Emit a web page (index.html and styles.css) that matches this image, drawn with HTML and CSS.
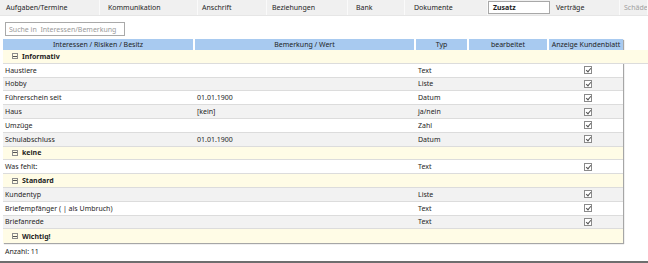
FILE: index.html
```html
<!DOCTYPE html>
<html lang="de">

<head>
    <meta charset="UTF-8">
    <meta name="viewport" content="width=device-width, initial-scale=1.0">
    <title>Zusatz</title>

    <link rel="stylesheet" href="styles.css">
</head>

<body>
    <div class="tabs">
        <div class="tab w1">Aufgaben/Termine</div>
        <div class="tab w2">Kommunikation</div>
        <div class="tab w3">Anschrift</div>
        <div class="tab w4">Beziehungen</div>
        <div class="tab w5">Bank</div>
        <div class="tab w6">Dokumente</div>
        <div class="tab w7 active">Zusatz</div>
        <div class="tab w8">Verträge</div>
        <div class="tab w9 disabled">Schäden</div>
    </div>

    <div class="toolbar">
        <input type="text" class="search" placeholder="Suche in  Interessen/Bemerkung">
    </div>

    <div class="grid">
        <div class="row head">
            <div>Interessen / Risiken / Besitz</div>
            <div>Bemerkung / Wert</div>
            <div>Typ</div>
            <div>bearbeitet</div>
            <div>Anzeige Kundenblatt</div>
        </div>

        <div class="group wide"><span class="toggle"></span>Informativ</div>
        <div class="row">
            <div>Haustiere</div><div></div><div>Text</div><div></div><div class="check"><span class="box"></span></div>
        </div>
        <div class="row alt">
            <div>Hobby</div><div></div><div>Liste</div><div></div><div class="check"><span class="box"></span></div>
        </div>
        <div class="row">
            <div>Führerschein seit</div><div>01.01.1900</div><div>Datum</div><div></div><div class="check"><span class="box"></span></div>
        </div>
        <div class="row alt">
            <div>Haus</div><div>[kein]</div><div>ja/nein</div><div></div><div class="check"><span class="box"></span></div>
        </div>
        <div class="row">
            <div>Umzüge</div><div></div><div>Zahl</div><div></div><div class="check"><span class="box"></span></div>
        </div>
        <div class="row alt">
            <div>Schulabschluss</div><div>01.01.1900</div><div>Datum</div><div></div><div class="check"><span class="box"></span></div>
        </div>

        <div class="group"><span class="toggle"></span>keine</div>
        <div class="row">
            <div>Was fehlt:</div><div></div><div>Text</div><div></div><div class="check"><span class="box"></span></div>
        </div>

        <div class="group"><span class="toggle"></span>Standard</div>
        <div class="row alt">
            <div>Kundentyp</div><div></div><div>Liste</div><div></div><div class="check"><span class="box"></span></div>
        </div>
        <div class="row">
            <div>Briefempfänger ( | als Umbruch)</div><div></div><div>Text</div><div></div><div class="check"><span class="box"></span></div>
        </div>
        <div class="row alt">
            <div>Briefanrede</div><div></div><div>Text</div><div></div><div class="check"><span class="box"></span></div>
        </div>

        <div class="group last"><span class="toggle"></span>Wichtig!</div>
    </div>

    <div class="count">Anzahl: 11</div>
    <div class="bottom-bar"></div>
</body>

</html>
```

FILE: styles.css
```css
body {
    margin: 0;
    width: 648px;
    height: 263px;
    overflow: hidden;
    position: relative;
    background-color: #fff;
    font-family: 'Noto Sans', sans-serif;
    font-size: 7px;
    color: #1e1e1e;
}

/* tab strip */
.tabs {
    display: flex;
    height: 15px;
    background-color: #f0f0f0;
    border-bottom: 1px solid #e6e6e6;
}

.tab {
    box-sizing: border-box;
    padding-left: 6px;
    line-height: 15px;
    border-right: 1px solid #fafafa;
    white-space: nowrap;
    overflow: hidden;
}

.w1 { width: 100px; }
.w2 { width: 98px; padding-left: 8px; }
.w3 { width: 69px; padding-left: 4px; }
.w4 { width: 81px; padding-left: 5px; }
.w5 { width: 57px; padding-left: 8px; }
.w6 { width: 83px; padding-left: 9px; }
.w7 { width: 62px; padding-left: 4px; }
.w8 { width: 70px; }
.w9 { flex: 1; padding-left: 4px; }

.tab.active {
    margin-top: 1px;
    height: 13px;
    line-height: 11px;
    background-color: #fff;
    border: 1px solid #a8a8a8;
    font-weight: bold;
}

.tab.disabled {
    color: #a0a0a0;
}

/* search */
.toolbar {
    padding: 6px 0 0 5px;
    height: 16px;
}

.search {
    box-sizing: border-box;
    width: 120px;
    height: 14px;
    margin: 0;
    padding: 0 3px;
    border: 1px solid #a9a9a9;
    font-family: inherit;
    font-size: 7px;
    color: #333;
}

.search::placeholder {
    color: #9a9a9a;
}

/* grid */
.grid {
    margin: 1px 0 0 3px;
    width: 620px;
    box-shadow: 1px 1px 1px rgba(0, 0, 0, 0.35);
}

.row {
    display: grid;
    grid-template-columns: 190px 219px 51px 78px 74px;
    column-gap: 2px;
    box-sizing: border-box;
    height: 13.8px;
    align-items: center;
    background-color: #fff;
    border-bottom: 1px solid #dcdcdc;
}

.row > div {
    padding-left: 2px;
    white-space: nowrap;
    overflow: hidden;
}

.row.alt {
    background-color: #f2f2f2;
}

.row.head {
    height: 11px;
    border-bottom: none;
    align-items: stretch;
}

.row.head > div {
    padding-left: 0;
    text-align: center;
    line-height: 11px;
    background-color: #a8caf0;
}

.group {
    display: flex;
    align-items: center;
    box-sizing: border-box;
    height: 13.8px;
    padding-left: 9px;
    background-color: #fffce6;
    border-bottom: 1px solid #dcdcdc;
    font-weight: bold;
}

.group.wide {
    margin-right: -28px;
}

.group.last {
    border-bottom: none;
}

.toggle {
    box-sizing: border-box;
    width: 6px;
    height: 6px;
    margin-right: 4px;
    border: 1px solid #8c8c8c;
    background: linear-gradient(#555, #555) center / 4px 1px no-repeat;
}

.check {
    display: flex;
    justify-content: center;
}

.box {
    box-sizing: border-box;
    width: 8px;
    height: 8px;
    border: 1px solid #8a8a8a;
    background-color: #fff;
    position: relative;
    margin-left: 2px;
}

.box::after {
    content: '';
    position: absolute;
    left: 2px;
    top: 0px;
    width: 2px;
    height: 4px;
    border-right: 1px solid #555;
    border-bottom: 1px solid #555;
    transform: rotate(40deg);
}

.count {
    padding: 4px 0 0 5px;
}

.bottom-bar {
    position: absolute;
    left: 0;
    right: 0;
    bottom: 0;
    height: 2px;
    background-color: #6e6e6e;
}
```
